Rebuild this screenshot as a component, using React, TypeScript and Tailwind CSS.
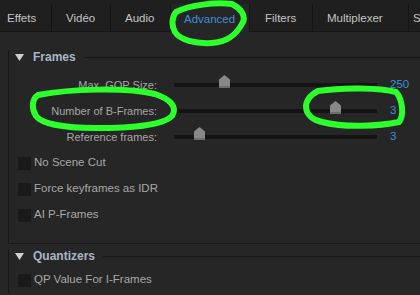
import React from "react";

type Tab = { label: string; w: string; pl: string; active?: boolean };

const tabs: Tab[] = [
  { label: "Effets", w: "w-[52px]", pl: "pl-[7px]" },
  { label: "Vidéo", w: "w-[59px]", pl: "pl-[14px]" },
  { label: "Audio", w: "w-[60px]", pl: "pl-[14px]" },
  { label: "Advanced", w: "w-[79px]", pl: "pl-[13px]", active: true },
  { label: "Filters", w: "w-[63px]", pl: "pl-[15px]" },
  { label: "Multiplexer", w: "w-[96px]", pl: "pl-[14px]" },
  { label: "S", w: "w-[40px]", pl: "pl-[4px]" },
];

const sliders = [
  { label: "Max. GOP Size:", value: "250", thumb: 45 },
  { label: "Number of B-Frames:", value: "3", thumb: 156 },
  { label: "Reference frames:", value: "3", thumb: 20 },
];

const Triangle = () => (
  <svg width="9" height="7" viewBox="0 0 9 7" className="ml-[6px] shrink-0">
    <path d="M0 0 H9 L4.5 7 Z" fill="#cfcfcf" />
  </svg>
);

const GroupHeader = ({ title }: { title: string }) => (
  <div className="-mt-[7px] flex h-[14px] items-center">
    <Triangle />
    <span className="ml-[9px] text-[12px] font-bold text-[#a9b6c6]">{title}</span>
    <div className="ml-[8px] h-px flex-1 bg-[#171717]" />
  </div>
);

const Check = ({ label }: { label: string }) => (
  <div className="flex h-[26px] items-center">
    <div className="ml-[9px] h-[13px] w-[13px] bg-[#1a1a1a]" />
    <span className="ml-[3px] text-[11.5px] text-[#a8a8a8]">{label}</span>
  </div>
);

const Thumb = ({ left }: { left: number }) => (
  <svg
    width="11"
    height="13"
    viewBox="0 0 11 13"
    className="absolute -top-[8px]"
    style={{ left }}
  >
    <path d="M5.5 0 L11 4.5 V13 H0 V4.5 Z" fill="#888888" />
    <rect x="0" y="11" width="11" height="2" fill="#6e6e6e" />
  </svg>
);

export default function App() {
  return (
    <div className="relative h-[295px] w-[420px] overflow-hidden bg-[#262626] font-['Liberation_Sans',Arial,sans-serif]">
      {/* tab strip */}
      <div className="flex h-[32px] bg-[#1f1f1f] pt-[4px]">
        {tabs.map((t) => (
          <div
            key={t.label}
            className={`${t.w} ${t.pl} flex h-[28px] shrink-0 items-center border-r border-[#141414] pt-[3px] text-[11.5px] ${
              t.active
                ? "bg-[#262626] text-[#3f8fd8]"
                : "border-b border-b-[#161616] text-[#c4c4c4]"
            }`}
          >
            {t.label}
          </div>
        ))}
        <div className="flex-1 border-b border-[#161616]" />
      </div>

      {/* Frames */}
      <div className="ml-[8px] mt-[25px] border-b border-l border-[#171717] pb-[15px]">
        <GroupHeader title="Frames" />
        <div className="mt-[8px]">
          {sliders.map((s) => (
            <div key={s.label} className="flex h-[26px] items-center">
              <span className="w-[148px] shrink-0 text-right text-[11px] text-[#a6a6a6]">
                {s.label}
              </span>
              <div className="relative ml-[17px] h-[4px] w-[203px] shrink-0 bg-[#141414]">
                <Thumb left={s.thumb} />
              </div>
              <span className="ml-[13px] text-[11.5px] text-[#3b8fd9]">{s.value}</span>
            </div>
          ))}
          <Check label="No Scene Cut" />
          <Check label="Force keyframes as IDR" />
          <Check label="AI P-Frames" />
        </div>
      </div>

      {/* Quantizers */}
      <div className="ml-[8px] mt-[12px] border-l border-[#171717]">
        <GroupHeader title="Quantizers" />
        <div className="mt-[4px]">
          <Check label="QP Value For I-Frames" />
        </div>
      </div>

      {/* hand-drawn highlight marks */}
      <svg
        className="pointer-events-none absolute left-0 top-0"
        width="420"
        height="295"
        viewBox="0 0 420 295"
        fill="none"
        stroke="#2cff2c"
        strokeWidth="6"
        strokeLinecap="round"
        strokeLinejoin="round"
      >
        <path d="M176 12 C190 5 215 2 232 4 C240 8 246 15 243 22 C238 32 230 42 212 43 C195 44 180 40 175 32 C171 25 172 17 176 12 Z" />
        <path d="M38 95 C70 89 125 87 155 94 C170 99 178 107 172 116 C162 126 130 128 95 128 C65 128 42 124 36 116 C31 108 32 99 38 95 Z" />
        <path d="M318 91 C345 87 380 88 396 92 C403 100 404 116 399 122 C380 126 345 128 322 122 C303 118 300 100 318 91 Z" />
      </svg>
    </div>
  );
}
